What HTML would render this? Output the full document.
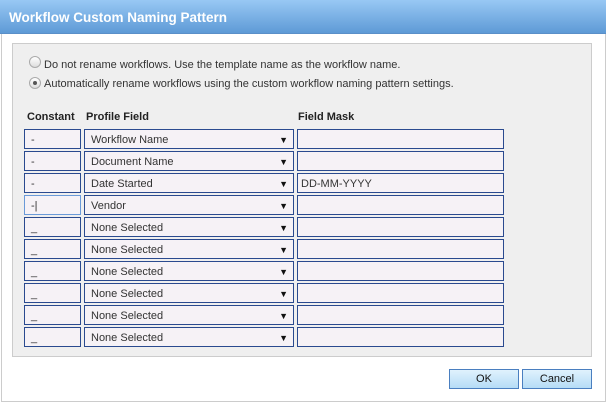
<!DOCTYPE html><html><head><style>
body{margin:0;width:606px;height:402px;background:#fff;font-family:"Liberation Sans",sans-serif;font-size:11px;color:#333;position:relative;overflow:hidden}
.title{position:absolute;left:0;top:0;width:606px;height:33px;background:linear-gradient(#98c8f4,#5e9ad6);color:#fff;font-weight:bold;font-size:13.5px;line-height:35px;text-indent:9px;border-bottom:1px solid #5a8fc8}
.dlg{position:absolute;left:1px;top:33px;width:603px;height:368px;border-left:1px solid #ccc;border-right:1px solid #ccc;border-bottom:1px solid #ccc}
.panel{position:absolute;left:12px;top:43px;width:578px;height:312px;background:#efefef;border:1px solid #ccc}
.r{position:absolute;left:29px;color:#333}
.rad{position:absolute;left:29px;width:10px;height:10px;border:1px solid #aaa;border-radius:50%;background:linear-gradient(#fff,#ddd)}
.h{position:absolute;top:111px;font-weight:bold;font-size:11px;color:#222}
.b{position:absolute;height:18px;border:1px solid #2a4a8f;background:#f6f2f6;box-sizing:content-box;line-height:20px;text-indent:6px}
.arr{position:absolute;right:5px;top:0;font-size:9px;color:#111}
.btn{position:absolute;top:369px;width:68px;height:18px;border:1px solid #4a7fc0;background:linear-gradient(#e0f2fd,#b5dcf6);text-align:center;line-height:19px;font-size:11px;color:#111}
</style></head><body>
<div class="dlg"></div>
<div class="title">Workflow Custom Naming Pattern</div>
<div class="panel"></div>
<div class="rad" style="top:56px"></div><div class="r" style="left:44px;top:59px">Do not rename workflows. Use the template name as the workflow name.</div>
<div class="rad" style="top:77px"><div style="position:absolute;left:3px;top:3px;width:4px;height:4px;border-radius:50%;background:#555"></div></div><div class="r" style="left:44px;top:78px">Automatically rename workflows using the custom workflow naming pattern settings.</div>
<div class="h" style="left:27px">Constant</div><div class="h" style="left:86px">Profile Field</div><div class="h" style="left:298px">Field Mask</div>
<div id="rows"></div>
<script>
var d=[["-","Workflow Name",""],["-","Document Name",""],["-","Date Started","DD-MM-YYYY"],["-|","Vendor",""]];
for(var i=4;i<10;i++)d.push(["_","None Selected",""]);
var h="";for(var i=0;i<10;i++){var t=129+i*22;
h+='<div class="b" style="left:24px;top:'+t+'px;width:55px;'+(i==3?'border-color:#6a9ad8;':'')+'">'+d[i][0]+'</div>';
h+='<div class="b" style="left:84px;top:'+t+'px;width:208px">'+d[i][1]+'<span class="arr">▼</span></div>';
h+='<div class="b" style="left:297px;top:'+t+'px;width:205px;text-indent:3px">'+d[i][2]+'</div>';}
document.getElementById("rows").innerHTML=h;
</script>
<div class="btn" style="left:449px">OK</div><div class="btn" style="left:522px">Cancel</div>
</body></html>
